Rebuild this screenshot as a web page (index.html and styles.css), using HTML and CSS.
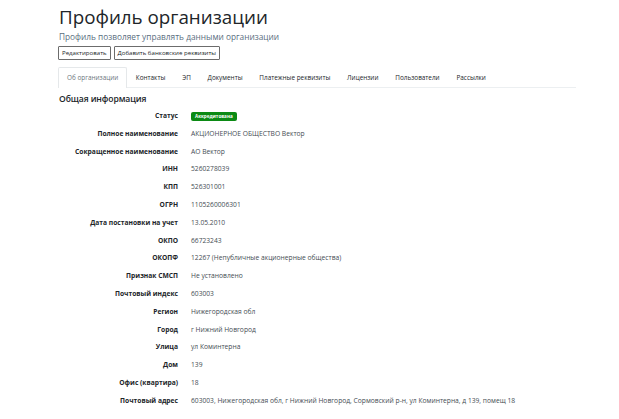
FILE: index.html
```html
<!DOCTYPE html>
<html lang="ru">
<head>
<meta charset="utf-8">
<link rel="stylesheet" href="styles.css">
</head>
<body>
<div class="page">
  <h1 class="title">Профиль организации</h1>
  <p class="subtitle">Профиль позволяет управлять данными организации</p>
  <div class="actions">
    <button class="btn">Редактировать</button>
    <button class="btn">Добавить банковские реквизиты</button>
  </div>
  <ul class="tabs">
    <li class="tab active">Об организации</li>
    <li class="tab">Контакты</li>
    <li class="tab">ЭП</li>
    <li class="tab">Документы</li>
    <li class="tab">Платежные реквизиты</li>
    <li class="tab">Лицензии</li>
    <li class="tab">Пользователи</li>
    <li class="tab">Рассылки</li>
  </ul>
  <h2 class="section">Общая информация</h2>
  <dl class="info">
    <dt>Статус</dt><dd><span class="badge">Аккредитована</span></dd>
    <dt>Полное наименование</dt><dd>АКЦИОНЕРНОЕ ОБЩЕСТВО Вектор</dd>
    <dt>Сокращенное наименование</dt><dd>АО Вектор</dd>
    <dt>ИНН</dt><dd>5260278039</dd>
    <dt>КПП</dt><dd>526301001</dd>
    <dt>ОГРН</dt><dd>1105260006301</dd>
    <dt>Дата постановки на учет</dt><dd>13.05.2010</dd>
    <dt>ОКПО</dt><dd>66723243</dd>
    <dt>ОКОПФ</dt><dd>12267 (Непубличные акционерные общества)</dd>
    <dt>Признак СМСП</dt><dd>Не установлено</dd>
    <dt>Почтовый индекс</dt><dd>603003</dd>
    <dt>Регион</dt><dd>Нижегородская обл</dd>
    <dt>Город</dt><dd>г Нижний Новгород</dd>
    <dt>Улица</dt><dd>ул Коминтерна</dd>
    <dt>Дом</dt><dd>139</dd>
    <dt>Офис (квартира)</dt><dd>18</dd>
    <dt>Почтовый адрес</dt><dd>603003, Нижегородская обл, г Нижний Новгород, Сормовский р-н, ул Коминтерна, д 139, помещ 18</dd>
  </dl>
</div>
</body>
</html>
```
FILE: styles.css
```css
* { box-sizing: border-box; }
html, body { margin: 0; padding: 0; background: #fff; }
body {
  font-family: "Open Sans", "Noto Sans", sans-serif;
  color: #212529;
}
.page {
  width: 518px;
  margin-left: 58px;
  padding-top: 3px;
}
.title {
  margin: 0;
  font-size: 18.8px;
  font-weight: 400;
  line-height: 28px;
  color: #212529;
  padding-left: 1px;
}
.subtitle {
  margin: 0;
  font-size: 8.3px;
  line-height: 11px;
  color: #5a6e80;
  padding-left: 1px;
}
.actions {
  display: flex;
  gap: 3px;
  margin-top: 4px;
}
.btn {
  font-family: inherit;
  font-size: 6.1px;
  color: #212529;
  background: #fff;
  border: 1px solid #6c6c6c;
  border-radius: 1px;
  height: 14px;
  padding: 0 3px;
  line-height: 12px;
}
.tabs {
  list-style: none;
  margin: 7px 0 0 0;
  padding: 0;
  display: flex;
  border-bottom: 1px solid #eceff1;
}
.tab {
  font-size: 6.4px;
  line-height: 19px;
  padding: 0 7.4px;
  color: #212529;
  border: 1px solid transparent;
  border-bottom: 0;
  border-radius: 2px 2px 0 0;
}
.tab.active {
  padding: 0 8px;
  color: #6c757d;
  border-color: #e5e8ea;
  margin-bottom: -1px;
  background: #fff;
}
.section {
  margin: 5px 0 0 1px;
  font-size: 8.6px;
  letter-spacing: -0.1px;
  font-weight: 600;
  line-height: 13px;
}
.info {
  display: grid;
  grid-template-columns: 120px 1fr;
  column-gap: 13px;
  row-gap: 0;
  margin: 1px 0 0 0;
  font-size: 6.7px;
}
.info dt {
  text-align: right;
  font-weight: 700;
  line-height: 17.8px;
}
.info dd {
  margin: 0;
  line-height: 17.8px;
  color: #444c53;
}
.badge {
  display: inline-block;
  background: #0b8a14;
  color: #fff;
  font-size: 4.6px;
  font-weight: 700;
  line-height: 9px;
  padding: 0 4px;
  border-radius: 2px;
  vertical-align: middle;
}
```
